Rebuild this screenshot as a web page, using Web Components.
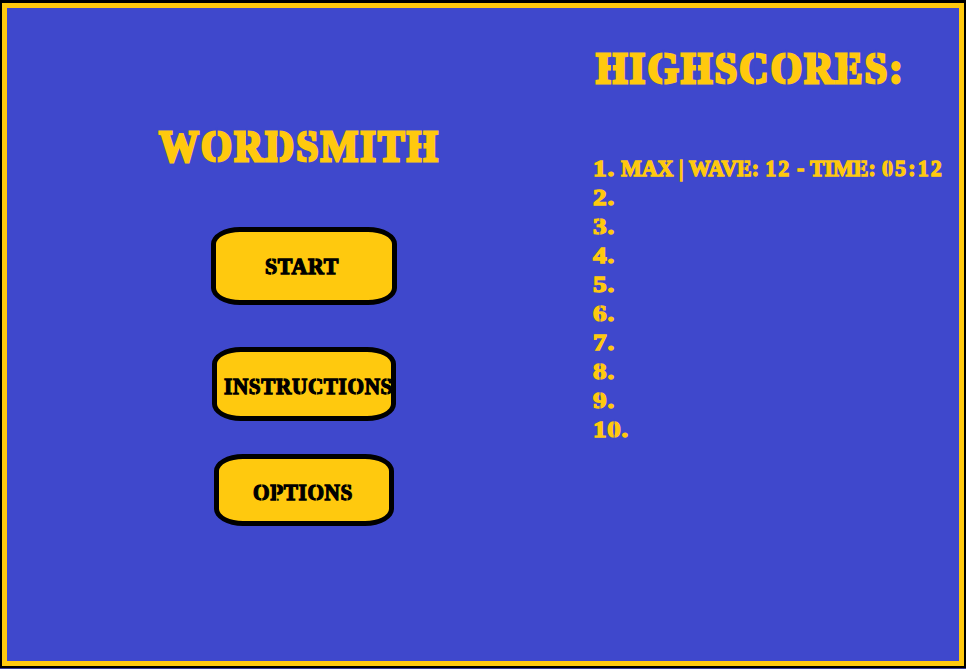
<!DOCTYPE html>
<html lang="en">
<head>
<meta charset="utf-8">
<title>Wordsmith</title>
<style>
html,body{margin:0;height:100%;overflow:hidden}
body{background:#3f48cc;--blue:#3f48cc;--gold:#ffc90e;font-family:"Liberation Serif","Times New Roman",serif;font-weight:bold}
</style>
</head>
<body>
<game-screen>
  <main-menu slot="menu"></main-menu>
  <high-scores slot="scores"></high-scores>
</game-screen>
<script>
// Gaps of each stencil letter: [x, top, bottom] as fractions of the letter's box and cap height.
const GAPS = {
  O:[[.5,0,1]], D:[[.46,0,1]], R:[[.43,0,.5]], P:[[.46,0,1]], E:[[.47,0,1]], C:[[.53,0,1]], G:[[.5,0,1]],
  H:[[.5,.35,.65]], S:[[.5,0,.2],[.5,.8,1]], U:[[.55,.8,1]],
  '0':[[.47,0,1]], '6':[[.47,0,.2],[.47,.8,1]], '8':[[.47,0,.2],[.47,.8,1]], '9':[[.47,0,.2],[.47,.8,1]], '3':[[.45,0,.2],[.45,.8,1]]
};
class StencilText extends HTMLElement {
  connectedCallback() {
    const w = +this.getAttribute('width'), size = +this.getAttribute('size');
    const big = size > 30, font = big ? 45 : 23, stroke = big ? 3 : 1.3;
    const root = this.attachShadow({mode:'open'});
    root.innerHTML = `<style>
      :host{display:block;position:relative;width:${w}px;height:${size}px;line-height:${big ? 48 : 26}px;font-size:${font}px;white-space:pre;-webkit-text-stroke:${stroke}px currentColor}
      .ink{display:inline-block;transform-origin:0 0;letter-spacing:${big ? .055 : .03}em;margin-left:${stroke / 3}px}
      .num{letter-spacing:.1em}
      .tight{letter-spacing:0}
      svg{position:absolute;left:0;top:0;width:100%;height:100%;overflow:visible;pointer-events:none}
    </style><span class="ink"></span><svg aria-hidden="true"></svg>`;
    const ink = root.querySelector('.ink'), text = this.getAttribute('text');
    if (text.includes('|')) {
      ink.innerHTML = text.replace(/\d+(:\d+)?|[A-Z| ]+/g, m => `<span class="${/\d/.test(m) ? 'num' : 'tight'}">${m}</span>`);
    } else ink.textContent = text;
    ink.style.transform = `scaleX(${w / ink.getBoundingClientRect().width})`;
    const origin = this.getBoundingClientRect(), cap = size * .66, top = size * .155 + (big ? 0 : .5);
    const range = document.createRange();
    const walker = document.createTreeWalker(ink, NodeFilter.SHOW_TEXT);
    let d = '', node;
    while ((node = walker.nextNode())) [...node.data].forEach((ch, i) => {
      range.setStart(node, i); range.setEnd(node, i + 1);
      const b = range.getBoundingClientRect();
      for (const [x, y0, y1] of GAPS[ch] || []) {
        const cx = b.left - origin.left + x * b.width * (big ? .95 : .98);
        d += `M${cx} ${top + y0 * cap - (y0 === 0 ? 2 : 0)}V${top + y1 * cap + (y1 === 1 ? 2.5 : 0)}`;
      }
    });
    root.querySelector('svg').innerHTML = `<path d="${d}" fill="none" stroke="var(--ground,var(--blue))" stroke-width="${big ? 1.8 : .8}"/>`;
  }
}
class MenuButton extends HTMLElement {
  connectedCallback() {
    this.attachShadow({mode:'open'}).innerHTML = `<style>
      :host{display:block;flex:none}
      button{all:unset;box-sizing:border-box;display:flex;align-items:flex-start;width:100%;height:100%;border:5px solid #000;border-radius:29px/17px;background:var(--gold);color:#000;--ground:var(--gold);cursor:pointer;padding:var(--pad)}
    </style><button><slot></slot></button>`;
  }
}
class MainMenu extends HTMLElement {
  connectedCallback() {
    this.attachShadow({mode:'open'}).innerHTML = `<style>
      :host{display:flex;flex-direction:column;color:var(--gold);padding:114px 0 0 151px}
      .title{margin:0 0 57px}
      h1{margin:0;font:inherit}
      nav{display:flex;flex-direction:column}
      .start{width:186px;height:78px;margin-left:53px;--pad:22px 0 0 49px}
      .instructions{width:184px;height:74px;margin:42px 0 0 54px;--pad:22px 0 0 7px}
      .options{width:180px;height:72px;margin:33px 0 0 56px;--pad:21px 0 0 34px}
    </style>
    <h1><stencil-text class="title" text="WORDSMITH" width="281" size="48"></stencil-text></h1>
    <nav>
      <menu-button class="start"><stencil-text text="START" width="74" size="24"></stencil-text></menu-button>
      <menu-button class="instructions"><stencil-text text="INSTRUCTIONS" width="169" size="24"></stencil-text></menu-button>
      <menu-button class="options"><stencil-text text="OPTIONS" width="100" size="24"></stencil-text></menu-button>
    </nav>`;
  }
}
class HighScores extends HTMLElement {
  connectedCallback() {
    const rows = Array.from({length:10}, (_, i) => `<div class="row"><stencil-text text="${i + 1}." width="${i === 9 ? 36 : 22}" size="24"></stencil-text>${i ? '' : '<stencil-text text="MAX | WAVE: 12 - TIME: 05:12" width="323" size="24"></stencil-text>'}</div>`).join('');
    this.attachShadow({mode:'open'}).innerHTML = `<style>
      :host{display:block;color:var(--gold);padding-top:36px}
      h2{margin:0 0 64px 2px;font:inherit}
      .row{height:29px;display:flex;gap:6px}
    </style><h2><stencil-text text="HIGHSCORES:" width="309" size="48"></stencil-text></h2>${rows}`;
  }
}
class GameScreen extends HTMLElement {
  connectedCallback() {
    this.attachShadow({mode:'open'}).innerHTML = `<style>
      :host{display:block;box-sizing:border-box;width:966px;height:669px;border-bottom:1px solid #343b98;background:#000;background-clip:padding-box;padding:3px 2px 2px}
      .field{box-sizing:border-box;height:663px;border:5px solid var(--gold);background:var(--blue);display:grid;grid-template-columns:586px 1fr}
    </style><div class="field"><slot name="menu"></slot><slot name="scores"></slot></div>`;
  }
}
customElements.define('game-screen', GameScreen);
customElements.define('main-menu', MainMenu);
customElements.define('high-scores', HighScores);
customElements.define('menu-button', MenuButton);
customElements.define('stencil-text', StencilText);
</script>
</body>
</html>
